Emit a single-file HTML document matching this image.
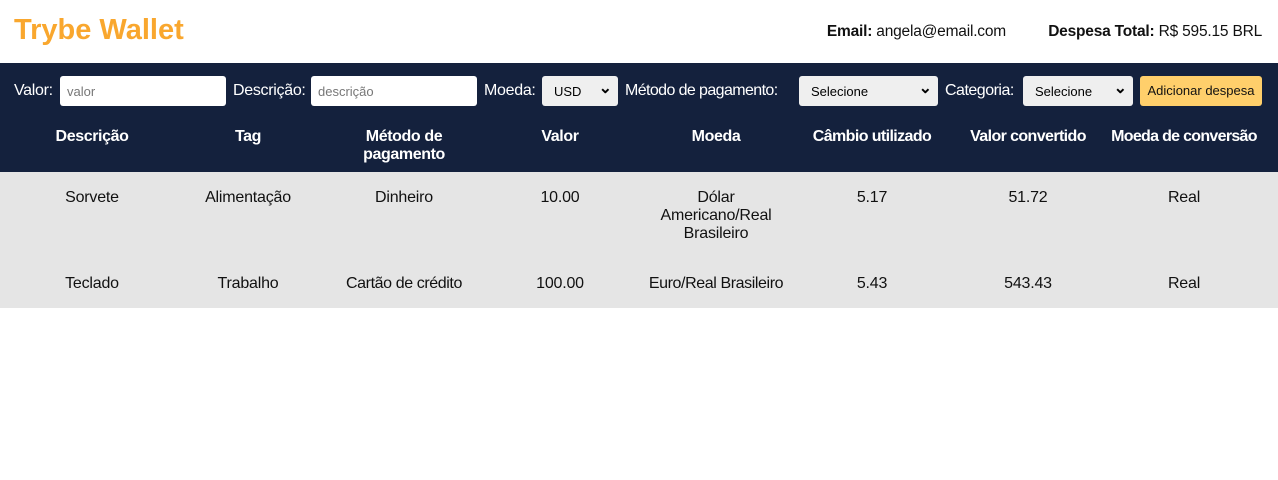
<!DOCTYPE html>
<html><head><meta charset="utf-8"><style>
*{margin:0;padding:0;box-sizing:border-box}
body{width:1278px;height:480px;background:#fff;font-family:"Liberation Sans",sans-serif;color:#111;position:relative;overflow:hidden}
.a{position:absolute;white-space:nowrap}
.title{left:14px;top:14px;font-size:29px;font-weight:bold;color:#f9a72e}
.hdr{top:23px;font-size:15.5px;letter-spacing:-0.2px}
.band{position:absolute;left:0;top:63px;width:1278px;height:109px;background:#14213d}
.lbl{color:#fff;font-size:16px;top:82px;letter-spacing:-0.3px}
.inp{position:absolute;top:76px;height:30px;background:#fff;border-radius:3px;font-size:13px;color:#777;padding:8px 7px}
.sel{position:absolute;top:76px;height:30px;background:#efefef;border-radius:3px;font-size:13px;color:#000;padding:8px 12px}
.sel:after{content:"⌄";position:absolute;right:6px;top:2px;font-size:16px;font-weight:bold}
.btn{position:absolute;left:1140px;top:76px;width:122px;height:30px;background:#ffcf6b;border-radius:3px;font-size:13px;text-align:center;line-height:30px;color:#111}
.body{position:absolute;left:0;top:172px;width:1278px;height:136px;background:#e5e5e5}
.c{position:absolute;width:156px;text-align:center;font-size:16px;line-height:18px;letter-spacing:-0.2px}
.th{color:#fff;font-weight:bold;top:128px;letter-spacing:-0.4px}
.r{top:189px}.r2{top:275px}
</style></head><body>
<div class="a title">Trybe Wallet</div>
<div class="a hdr" style="right:272px"><b>Email:</b> angela@email.com</div>
<div class="a hdr" style="right:16px"><b>Despesa Total:</b> R$ 595.15 BRL</div>
<div class="band"></div>
<div class="a lbl" style="left:14px">Valor:</div>
<div class="inp" style="left:60px;width:166px">valor</div>
<div class="a lbl" style="left:233px">Descrição:</div>
<div class="inp" style="left:311px;width:166px">descrição</div>
<div class="a lbl" style="left:484px">Moeda:</div>
<div class="sel" style="left:542px;width:76px">USD</div>
<div class="a lbl" style="left:625px;letter-spacing:-0.6px">Método de pagamento:</div>
<div class="sel" style="left:799px;width:139px">Selecione</div>
<div class="a lbl" style="left:945px;letter-spacing:-0.5px">Categoria:</div>
<div class="sel" style="left:1023px;width:110px">Selecione</div>
<div class="btn">Adicionar despesa</div>
<div class="c th" style="left:14px">Descrição</div>
<div class="c th" style="left:170px">Tag</div>
<div class="c th" style="left:326px">Método de<br>pagamento</div>
<div class="c th" style="left:482px">Valor</div>
<div class="c th" style="left:638px">Moeda</div>
<div class="c th" style="left:794px;letter-spacing:-0.6px">Câmbio utilizado</div>
<div class="c th" style="left:950px;letter-spacing:-0.6px">Valor convertido</div>
<div class="c th" style="left:1100px;width:168px;letter-spacing:-0.7px">Moeda de conversão</div>
<div class="body"></div>
<div class="c r" style="left:14px">Sorvete</div>
<div class="c r" style="left:170px">Alimentação</div>
<div class="c r" style="left:326px">Dinheiro</div>
<div class="c r" style="left:482px">10.00</div>
<div class="c r" style="left:638px">Dólar<br>Americano/Real<br>Brasileiro</div>
<div class="c r" style="left:794px">5.17</div>
<div class="c r" style="left:950px">51.72</div>
<div class="c r" style="left:1106px">Real</div>
<div class="c r2" style="left:14px">Teclado</div>
<div class="c r2" style="left:170px">Trabalho</div>
<div class="c r2" style="left:326px;letter-spacing:-0.4px">Cartão de crédito</div>
<div class="c r2" style="left:482px">100.00</div>
<div class="c r2" style="left:628px;width:176px;letter-spacing:-0.4px">Euro/Real Brasileiro</div>
<div class="c r2" style="left:794px">5.43</div>
<div class="c r2" style="left:950px">543.43</div>
<div class="c r2" style="left:1106px">Real</div>
</body></html>
